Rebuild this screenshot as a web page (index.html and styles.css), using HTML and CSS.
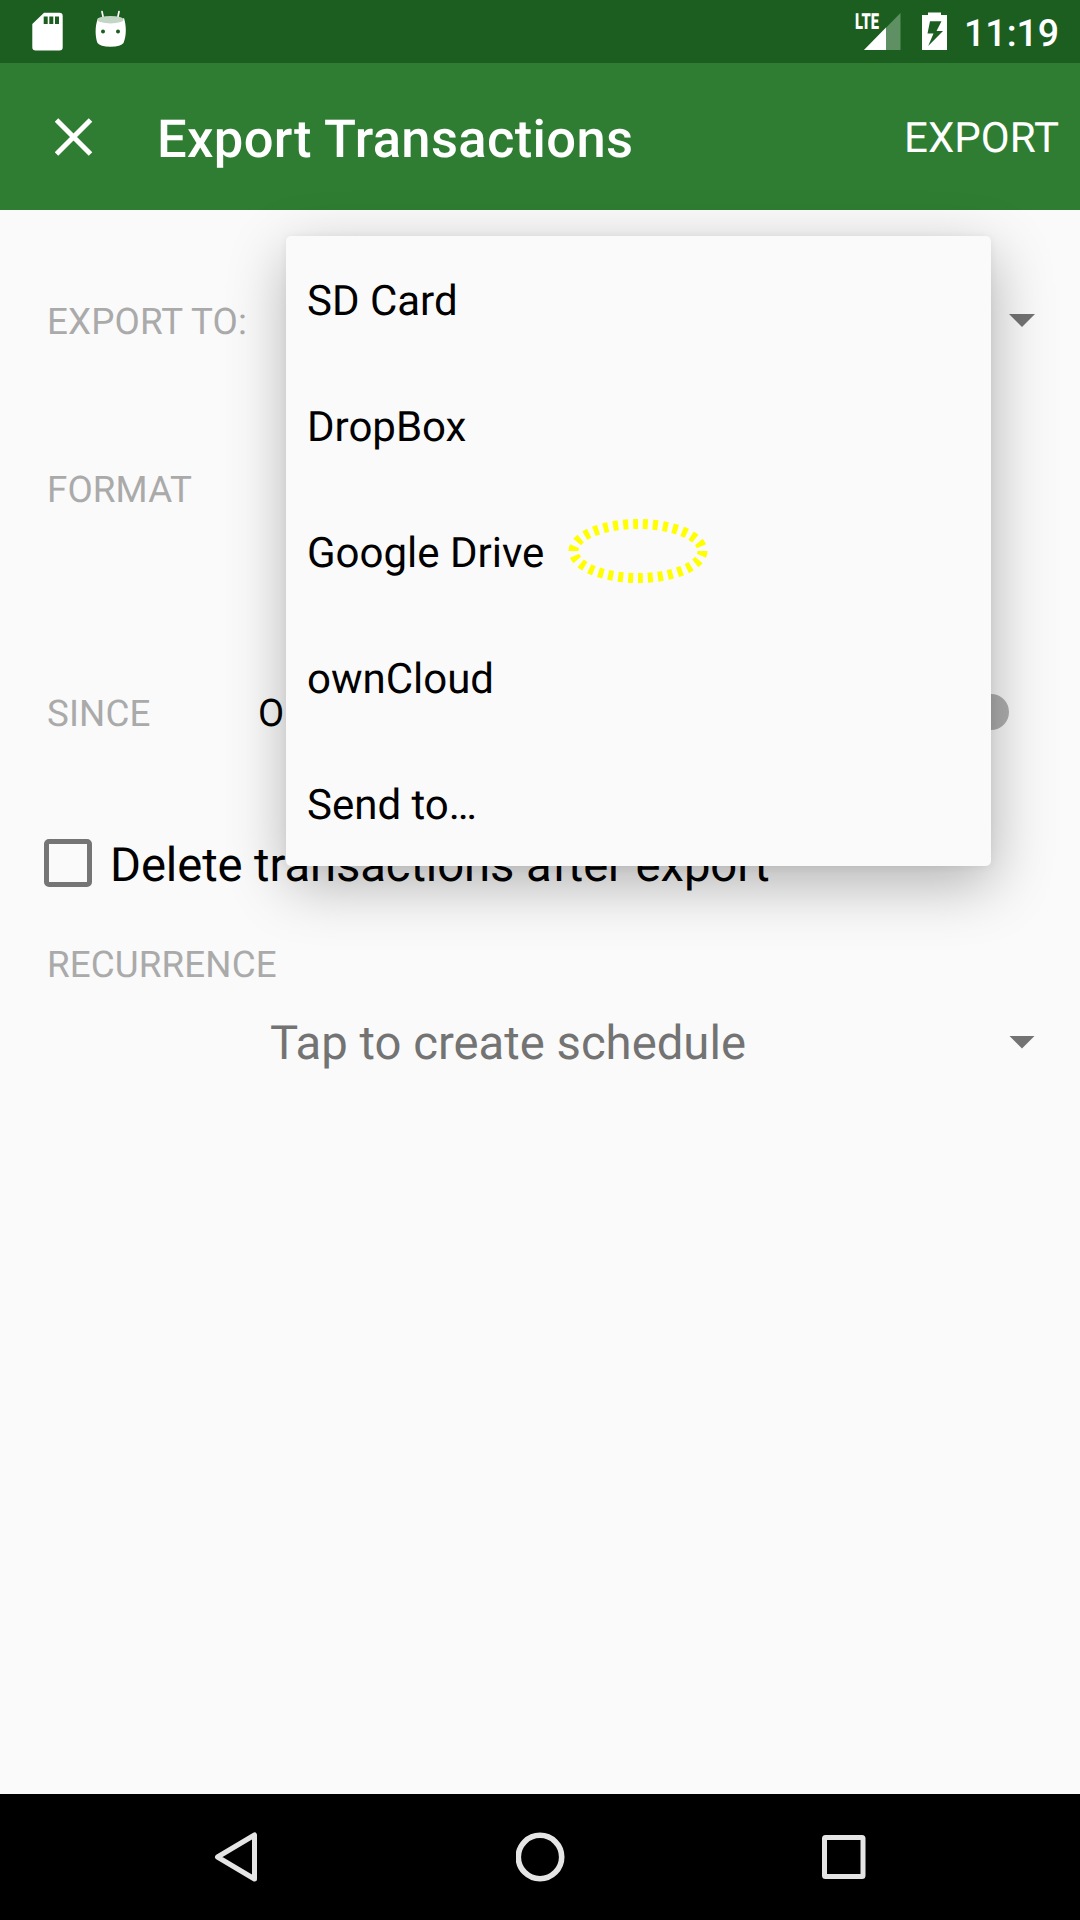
FILE: index.html
```html
<!DOCTYPE html>
<html lang="en">
<head>
<meta charset="utf-8">
<title>Export Transactions</title>
<link rel="stylesheet" href="styles.css">
</head>
<body>
<div class="screen">
  <header class="status-bar">
    <svg class="icon-sd" width="32" height="40" viewBox="0 0 32 40">
      <path fill="#fff" fill-rule="evenodd" d="M12 .7H27.500Q30.700 .7 30.700 4V35.200Q30.700 38.500 27.500 38.500H3.700Q.3 38.500 .3 35.200V12ZM11.700 4.500V12H15.700V4.500ZM17.300 4.500V12H21.300V4.500ZM23 4.500V12H27V4.500Z"/>
    </svg>
    <svg class="icon-debug" width="32" height="38" viewBox="0 0 32 38">
      <path d="M7 1.500 8.500 9M24 1.500 22.500 9" stroke="#fff" stroke-width="1.700" stroke-linecap="round"/>
      <path fill="#fff" d="M3 8Q16 16 29 8C31.500 16 31.500 26 28.500 33Q26 36.500 15.500 36.700Q5 36.500 2.500 33C-.1 26-.1 16 3 8Z"/>
      <ellipse cx="15.500" cy="9.700" rx="13" ry="3.700" fill="#c3d5c4"/>
      <circle cx="8" cy="21.500" r="2" fill="#1b5e20"/><circle cx="23" cy="21.500" r="2" fill="#1b5e20"/>
    </svg>
    <svg class="icon-signal" width="48" height="40" viewBox="0 0 48 40">
      <path fill="#5f9063" d="M45.500 1V38H9Z"/>
      <path fill="#fff" d="M31 15.500V38H9Z"/>
      <text class="network" x="0" y="17" textLength="24" lengthAdjust="spacingAndGlyphs">LTE</text>
    </svg>
    <svg class="icon-battery" width="26" height="40" viewBox="0 0 26 40">
      <path fill="#fff" fill-rule="evenodd" d="M6 .5H19V3H25V38H0V3H6ZM8 9.200 5.500 21.500H11.500L6.200 34 21 19H14.500L19.500 9.200Z"/>
    </svg>
    <span class="clock">11:19</span>
  </header>
  <div class="app-bar">
    <svg class="icon-close" width="38" height="38" viewBox="0 0 38 38">
      <path d="M1.500 2 35.500 36M35.500 2 1.500 36" stroke="#fff" stroke-width="5"/>
    </svg>
    <h1 class="title">Export Transactions</h1>
    <span class="action">EXPORT</span>
  </div>
  <main class="form">
    <div class="row row-target"><span class="label">EXPORT TO:</span><span class="caret"></span></div>
    <div class="row row-format"><span class="label">FORMAT</span></div>
    <div class="row row-since"><span class="label">SINCE</span><span class="date">O</span><span class="switch"></span></div>
    <div class="row row-delete"><span class="checkbox"></span><span class="delete-text">Delete transactions after export</span></div>
    <div class="row row-recurrence"><span class="label">RECURRENCE</span></div>
    <div class="row row-schedule"><span class="schedule">Tap to create schedule</span><span class="caret"></span></div>
    <ul class="menu">
      <li>SD Card</li>
      <li>DropBox</li>
      <li>Google Drive
        <svg class="highlight" width="140" height="64" viewBox="0 0 140 64">
          <ellipse cx="70" cy="32" rx="64.500" ry="27" fill="none" stroke="#ff0" stroke-width="10" pathLength="300" stroke-dasharray="5 5"/>
        </svg>
      </li>
      <li>ownCloud</li>
      <li>Send to…</li>
    </ul>
  </main>
  <nav class="nav-bar">
    <svg width="50" height="54" viewBox="0 0 50 54"><path d="M41.500 5V49L4.500 27Z" fill="none" stroke="#e5e5e5" stroke-width="5" stroke-linejoin="round"/></svg>
    <svg width="50" height="54" viewBox="0 0 50 54"><circle cx="24" cy="27" r="21.700" fill="none" stroke="#e5e5e5" stroke-width="5.600"/></svg>
    <svg width="50" height="54" viewBox="0 0 50 54"><rect x="5.500" y="7.500" width="38.500" height="39" rx="1" fill="none" stroke="#e5e5e5" stroke-width="5"/></svg>
  </nav>
</div>
</body>
</html>
```
FILE: styles.css
```css
* { box-sizing: border-box; }
body { margin: 0; font-family: Roboto, "Liberation Sans", sans-serif; text-rendering: geometricPrecision; }
svg { display: block; flex: none; }
.screen { display: flex; flex-direction: column; width: 1080px; height: 1920px; overflow: hidden; background: #fafafa; color: #000; }

.status-bar { display: flex; align-items: flex-start; flex: none; height: 63px; padding: 0 22px 0 32px; background: #1b5e20; color: #fff; }
.icon-sd { margin-top: 12px; }
.icon-debug { margin: 10px 0 0 31px; }
.icon-signal { margin: 12px 0 0 auto; overflow: visible; }
.icon-battery { margin: 12px 0 0 19px; }
.network { font-size: 22px; font-weight: 900; fill: #fff; }
.clock { width: 94px; margin-left: 16px; font-size: 37.500px; font-weight: 500; line-height: 68px; text-align: right; }

.app-bar { display: flex; align-items: center; flex: none; height: 147px; padding: 0 21px 0 55px; background: #2e7d32; color: #fff; }
.title { margin: 4px 0 0 64px; font-size: 52.500px; font-weight: 500; line-height: 62px; letter-spacing: .37px; }
.action { margin: 5px 0 0 auto; font-size: 42px; line-height: 50px; }

.form { position: relative; flex: 1; }
.row { display: flex; align-items: center; padding: 0 45px 0 47px; }
.label { width: 211px; font-size: 36.750px; letter-spacing: .12px; color: #aaa; white-space: nowrap; }
.row-target { height: 223px; }
.row-format { height: 113px; }
.row-since { height: 147px; margin-top: 94px; }
.row-delete { height: 156px; padding-left: 44px; }
.row-recurrence { height: 43px; }
.row-schedule { height: 114px; padding-left: 270px; }
.caret { width: 26px; height: 13px; margin: -2px 0 0 auto; background: #737373; clip-path: polygon(0 0, 100% 0, 50% 100%); }
.date { font-size: 38px; }
.switch { width: 36px; height: 36px; margin: -3px 26px 0 auto; border-radius: 50%; background: #b0b0b0; }
.checkbox { width: 48px; height: 48px; margin-top: -4px; border: 5px solid #757575; border-radius: 5px; }
.delete-text { margin-left: 18px; font-size: 47.250px; letter-spacing: -.11px; }
.schedule { font-size: 47.250px; color: #737373; }

.menu { position: absolute; top: 26px; left: 286px; width: 705px; margin: 0; padding: 0; border-radius: 5px; background: #fafafa; box-shadow: 2px 18px 60px rgba(0, 0, 0, .29), 0 1px 8px rgba(0, 0, 0, .06); list-style: none; }
.menu li { display: flex; align-items: center; height: 126px; padding: 5px 21px 0; font-size: 42px; }
.highlight { margin: -5px 0 0 24px; }

.nav-bar { display: flex; justify-content: space-between; flex: none; height: 126px; padding: 36px 211px 0 213px; background: #000; }
```
